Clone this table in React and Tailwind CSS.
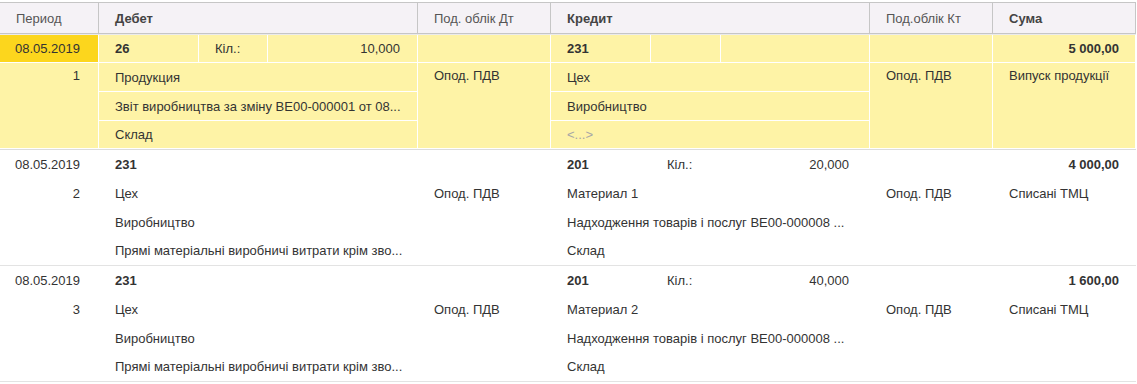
import React from "react";

const COLS = "grid grid-cols-[98px_99px_68px_149px_132px_99px_69px_148px_122px_142px] gap-px";

function Cell({ className = "", children }) {
  return <div className={"flex items-center overflow-hidden whitespace-nowrap " + className}>{children}</div>;
}

function YellowGroup() {
  const y = "bg-[#fef3a6]";
  return (
    <div className="w-[1136px] pr-px bg-white pb-px border-b border-[#dcdcdc]">
      <div className={`${COLS} grid-rows-[27px_28px_28px_27px] bg-white`}>
        <Cell className="bg-[#fcd61d] justify-end pr-[18px]">08.05.2019</Cell>
        <Cell className={`${y} pl-4 font-bold`}>26</Cell>
        <Cell className={`${y} pl-4`}>Кіл.:</Cell>
        <Cell className={`${y} justify-end pr-[17px]`}>10,000</Cell>
        <Cell className={y}></Cell>
        <Cell className={`${y} pl-4 font-bold`}>231</Cell>
        <Cell className={y}></Cell>
        <Cell className={y}></Cell>
        <Cell className={y}></Cell>
        <Cell className={`${y} justify-end pr-4 font-bold`}>5 000,00</Cell>

        <div className={`${y} row-span-3 flex justify-end items-start pt-[6px] pr-[18px]`}>1</div>
        <Cell className={`${y} col-span-3 pl-4`}>Продукция</Cell>
        <div className={`${y} row-span-3 pl-4 pt-[6px] whitespace-nowrap`}>Опод. ПДВ</div>
        <Cell className={`${y} col-span-3 pl-4`}>Цех</Cell>
        <div className={`${y} row-span-3 pl-4 pt-[6px] whitespace-nowrap`}>Опод. ПДВ</div>
        <div className={`${y} row-span-3 pl-4 pt-[6px] whitespace-nowrap`}>Випуск продукції</div>

        <Cell className={`${y} col-span-3 pl-4`}>Звіт виробництва за зміну ВЕ00-000001 от 08...</Cell>
        <Cell className={`${y} col-span-3 pl-4`}>Виробництво</Cell>

        <Cell className={`${y} col-span-3 pl-4`}>Склад</Cell>
        <Cell className={`${y} col-span-3 pl-4 text-[#a6a6a6]`}>&lt;...&gt;</Cell>
      </div>
    </div>
  );
}

function WhiteGroup({ n, qty, sum, mat }) {
  return (
    <div className="w-[1136px] pr-px bg-white pb-px border-b border-[#e3e3e3]">
      <div className={`${COLS} grid-rows-[28px_28px_28px_27px]`}>
        <Cell className="justify-end pr-[18px]">08.05.2019</Cell>
        <Cell className="pl-4 font-bold">231</Cell>
        <Cell></Cell>
        <Cell></Cell>
        <Cell></Cell>
        <Cell className="pl-4 font-bold">201</Cell>
        <Cell className="pl-4">Кіл.:</Cell>
        <Cell className="justify-end pr-5">{qty}</Cell>
        <Cell></Cell>
        <Cell className="justify-end pr-4 font-bold">{sum}</Cell>

        <Cell className="justify-end pr-[18px]">{n}</Cell>
        <Cell className="col-span-3 pl-4">Цех</Cell>
        <Cell className="pl-4">Опод. ПДВ</Cell>
        <Cell className="col-span-3 pl-4">{mat}</Cell>
        <Cell className="pl-4">Опод. ПДВ</Cell>
        <Cell className="pl-4">Списані ТМЦ</Cell>

        <Cell></Cell>
        <Cell className="col-span-3 pl-4">Виробництво</Cell>
        <Cell></Cell>
        <Cell className="col-span-3 pl-4">Надходження товарів і послуг ВЕ00-000008 ...</Cell>
        <Cell></Cell>
        <Cell></Cell>

        <Cell></Cell>
        <Cell className="col-span-3 pl-4">Прямі матеріальні виробничі витрати крім зво...</Cell>
        <Cell></Cell>
        <Cell className="col-span-3 pl-4">Склад</Cell>
        <Cell></Cell>
        <Cell></Cell>
      </div>
    </div>
  );
}

export default function App() {
  return (
    <div className="w-[1137px] h-[384px] bg-white overflow-hidden text-[13px] text-[#333333] font-['Liberation_Sans',Arial,sans-serif] leading-none">
      <div className="h-[2px]" />
      <div className="w-[1136px] bg-[#c6c6c6] border border-l-0 border-[#c6c6c6]">
        <div className="grid grid-cols-[98px_318px_132px_318px_122px_142px] gap-px h-[30px]">
          <Cell className="bg-[#f5f2f6] pl-4 text-[#555555]">Период</Cell>
          <Cell className="bg-[#f5f2f6] pl-4 font-bold text-[#444444]">Дебет</Cell>
          <Cell className="bg-[#f5f2f6] pl-4 text-[#555555]">Под. облік Дт</Cell>
          <Cell className="bg-[#f5f2f6] pl-4 font-bold text-[#444444]">Кредит</Cell>
          <Cell className="bg-[#f5f2f6] pl-4 text-[#555555]">Под.облік Кт</Cell>
          <Cell className="bg-[#f5f2f6] pl-4 font-bold text-[#444444]">Сума</Cell>
        </div>
      </div>
      <div className="h-px bg-[#ebebeb] w-[1136px]" />
      <YellowGroup />
      <WhiteGroup n="2" qty="20,000" sum="4 000,00" mat="Материал 1" />
      <WhiteGroup n="3" qty="40,000" sum="1 600,00" mat="Материал 2" />
    </div>
  );
}
